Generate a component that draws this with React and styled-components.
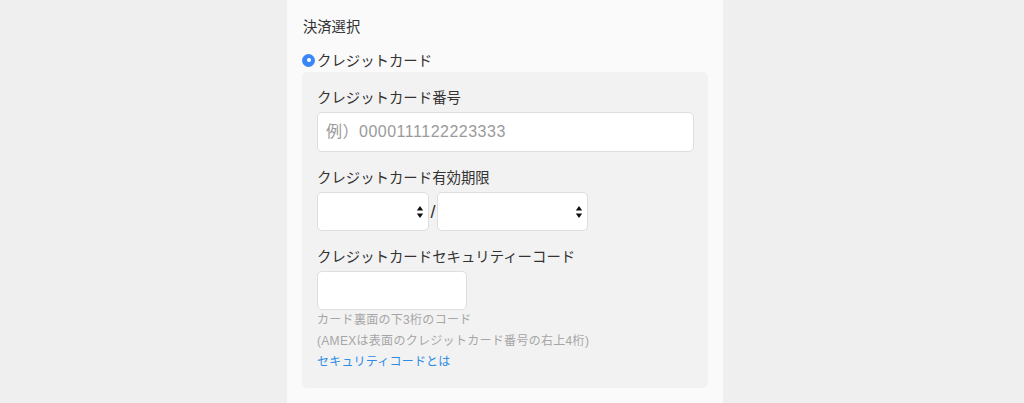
import React from "react";
import styled, { createGlobalStyle } from "styled-components";

const Global = createGlobalStyle`
  html, body { margin: 0; padding: 0; background: #efefef; }
  body { font-family: "Liberation Sans", "Noto Sans CJK JP", sans-serif; color: #333; }
  * { box-sizing: border-box; }
`;

const Page = styled.div`
  display: flex;
  min-height: 403px;
  padding-left: 287px;
`;

const Column = styled.div`
  width: 436px;
  min-height: 403px;
  background: #fafafa;
  padding: 15px 15px 0;
`;

const Title = styled.div`
  font-size: 14.3px;
  line-height: 24px;
  padding-left: 1px;
  color: #333;
`;

const RadioRow = styled.label`
  display: flex;
  align-items: center;
  margin-top: 8px;
  height: 24px;
  font-size: 14.4px;
  color: #333;
`;

const RadioDot = styled.span`
  width: 13px;
  height: 13px;
  border-radius: 50%;
  background: #3b86f7;
  display: flex;
  align-items: center;
  justify-content: center;
  margin-right: 2px;
  margin-top: 2px;
  &::after {
    content: "";
    width: 4px;
    height: 4px;
    border-radius: 50%;
    background: #fff;
  }
`;

const Panel = styled.div`
  background: #f2f2f2;
  border-radius: 5px;
  padding: 14px 15px 15px;
  margin-top: 1px;
  display: flex;
  flex-direction: column;
  gap: 14px;
`;

const Field = styled.div`
  display: flex;
  flex-direction: column;
  align-items: flex-start;
`;

const Label = styled.div`
  font-size: 14.4px;
  line-height: 24px;
  margin-bottom: 2px;
  color: #333;
`;

const TextInput = styled.input`
  width: ${(p) => p.$w};
  height: ${(p) => p.$h || "40px"};
  border: 1px solid #dedede;
  border-radius: 5px;
  background: #fff;
  padding: 0 8px;
  font-family: inherit;
  font-size: 16px;
  letter-spacing: 0.5px;
  color: #333;
  outline: none;
  &::placeholder { color: #9a9a9a; }
`;

const ExpiryRow = styled.div`
  display: flex;
  align-items: center;
`;

const SelectBox = styled.div`
  width: ${(p) => p.$w};
  height: 39px;
  border: 1px solid #dedede;
  border-radius: 5px;
  background: #fff;
  display: flex;
  align-items: center;
  justify-content: flex-end;
  padding-right: 4px;
`;

const Slash = styled.span`
  width: 8px;
  text-align: center;
  font-size: 18px;
  color: #333;
  line-height: 1;
`;

const Help = styled.div`
  font-size: 12px;
  line-height: 21px;
  color: #a6a6a6;
  letter-spacing: 0.3px;
`;

const Link = styled.a`
  font-size: 12px;
  line-height: 21px;
  color: #2f8be3;
  letter-spacing: 0.2px;
  text-decoration: none;
`;

const Arrows = () => (
  <svg width="8" height="14" viewBox="0 0 8 14">
    <path d="M4 1 L7.2 5.6 L0.8 5.6 Z" fill="#111" />
    <path d="M4 13 L7.2 8.4 L0.8 8.4 Z" fill="#111" />
  </svg>
);

export default function App() {
  return (
    <>
      <Global />
      <Page>
        <Column>
          <Title>決済選択</Title>
          <RadioRow>
            <RadioDot />
            クレジットカード
          </RadioRow>
          <Panel>
            <Field>
              <Label>クレジットカード番号</Label>
              <TextInput $w="377px" placeholder="例）0000111122223333" />
            </Field>
            <Field>
              <Label>クレジットカード有効期限</Label>
              <ExpiryRow>
                <SelectBox $w="112px"><Arrows /></SelectBox>
                <Slash>/</Slash>
                <SelectBox $w="151px"><Arrows /></SelectBox>
              </ExpiryRow>
            </Field>
            <Field>
              <Label>クレジットカードセキュリティーコード</Label>
              <TextInput $w="150px" $h="39px" />
              <Help>カード裏面の下3桁のコード</Help>
              <Help>(AMEXは表面のクレジットカード番号の右上4桁)</Help>
              <Link href="#">セキュリティコードとは</Link>
            </Field>
          </Panel>
        </Column>
      </Page>
    </>
  );
}
